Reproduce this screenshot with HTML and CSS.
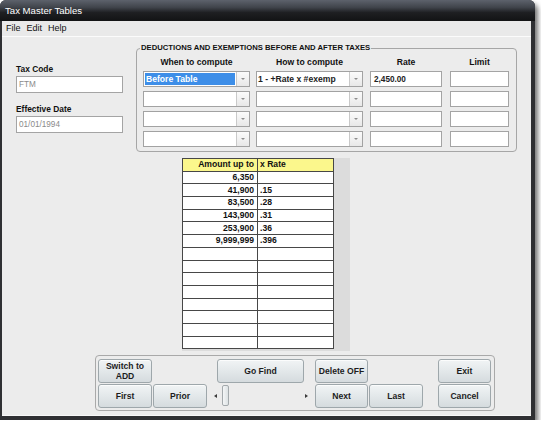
FILE: index.html
```html
<!DOCTYPE html>
<html>
<head>
<meta charset="utf-8">
<title>Tax Master Tables</title>
<link rel="stylesheet" href="styles.css">
</head>
<body>
<div class="window">
  <div class="titlebar">Tax Master Tables</div>
  <div class="client">
    <div class="menubar"><span>File</span><span>Edit</span><span>Help</span></div>

    <div class="top">
      <div class="ident">
        <div class="lbl">Tax Code</div>
        <div class="field dim">FTM</div>
        <div class="lbl lbl-gap">Effective Date</div>
        <div class="field dim">01/01/1994</div>
      </div>

      <fieldset class="deduct">
        <legend>DEDUCTIONS AND EXEMPTIONS BEFORE AND AFTER TAXES</legend>
        <div class="dgrid">
          <div class="colhead">When to compute</div>
          <div class="colhead">How to compute</div>
          <div class="colhead">Rate</div>
          <div class="colhead">Limit</div>

          <div class="combo"><div class="val"><span class="sel">Before Table</span></div><div class="drop"><i></i></div></div>
          <div class="combo"><div class="val">1 - +Rate x #exemp</div><div class="drop"><i></i></div></div>
          <div class="field strong">2,450.00</div>
          <div class="field"></div>

          <div class="combo"><div class="val"></div><div class="drop"><i></i></div></div>
          <div class="combo"><div class="val"></div><div class="drop"><i></i></div></div>
          <div class="field"></div>
          <div class="field"></div>

          <div class="combo"><div class="val"></div><div class="drop"><i></i></div></div>
          <div class="combo"><div class="val"></div><div class="drop"><i></i></div></div>
          <div class="field"></div>
          <div class="field"></div>

          <div class="combo"><div class="val"></div><div class="drop"><i></i></div></div>
          <div class="combo"><div class="val"></div><div class="drop"><i></i></div></div>
          <div class="field"></div>
          <div class="field"></div>
        </div>
      </fieldset>
    </div>

    <div class="tablepane">
      <table class="rates">
        <colgroup><col class="c-amt"><col class="c-rate"></colgroup>
        <thead>
          <tr><th class="num">Amount up to</th><th>x Rate</th></tr>
        </thead>
        <tbody>
          <tr><td class="num">6,350</td><td></td></tr>
          <tr><td class="num">41,900</td><td>.15</td></tr>
          <tr><td class="num">83,500</td><td>.28</td></tr>
          <tr><td class="num">143,900</td><td>.31</td></tr>
          <tr><td class="num">253,900</td><td>.36</td></tr>
          <tr><td class="num">9,999,999</td><td>.396</td></tr>
          <tr><td></td><td></td></tr>
          <tr><td></td><td></td></tr>
          <tr><td></td><td></td></tr>
          <tr><td></td><td></td></tr>
          <tr><td></td><td></td></tr>
          <tr><td></td><td></td></tr>
          <tr><td></td><td></td></tr>
          <tr><td></td><td></td></tr>
        </tbody>
      </table>
    </div>

    <div class="navpanel">
      <button class="btn b-switch">Switch to<br>ADD</button>
      <button class="btn b-find">Go Find</button>
      <button class="btn b-delete">Delete OFF</button>
      <button class="btn b-exit">Exit</button>

      <button class="btn b-first">First</button>
      <button class="btn b-prior">Prior</button>
      <div class="scroller">
        <span class="arrow left"></span>
        <span class="thumb"></span>
        <span class="arrow right"></span>
      </div>
      <button class="btn b-next">Next</button>
      <button class="btn b-last">Last</button>
      <button class="btn b-cancel">Cancel</button>
    </div>
  </div>
</div>
</body>
</html>
```

FILE: styles.css
```css
html, body {
  margin: 0;
  padding: 0;
  background: #ffffff;
}

body {
  font-family: "Liberation Sans", Arial, sans-serif;
  color: #111;
}

/* ---- window frame ---- */
.window {
  width: 535px;
  height: 420px;
  display: flex;
  flex-direction: column;
  background: #2f3033;
  border-radius: 6px 6px 0 0;
  box-shadow: 3px 4px 5px rgba(0, 0, 0, 0.55);
}

.titlebar {
  height: 21px;
  flex: none;
  padding-left: 5px;
  font-size: 9.6px;
  line-height: 22px;
  color: #ffffff;
  border-radius: 6px 6px 0 0;
  background: linear-gradient(#5d626c 0%, #40444b 35%, #1e1f22 60%, #121314 100%);
}

.client {
  flex: 1;
  margin: 0 4px 4px 2px;
  background: #ececec;
  border-bottom: 1px solid #f8f8f8;
}

.menubar {
  height: 15px;
  display: flex;
  gap: 6px;
  padding-left: 4px;
  font-size: 9px;
  line-height: 15px;
  color: #111;
  background: #e9e9e9;
  border-bottom: 1px solid #fbfbfb;
}

/* ---- header area ---- */
.top {
  display: flex;
  align-items: flex-start;
}

.ident {
  width: 107px;
  margin-left: 14px;
  padding-top: 27px;
}

.lbl {
  font-size: 8.4px;
  font-weight: bold;
  line-height: 11px;
  margin-bottom: 1px;
}

.lbl-gap {
  margin-top: 11px;
}

.field {
  height: 17px;
  box-sizing: border-box;
  border: 1px solid #a4a4a4;
  background: #ffffff;
  padding-left: 2px;
  font-size: 8.2px;
  line-height: 15px;
  white-space: nowrap;
  overflow: hidden;
}

.field.dim {
  color: #8a8a8a;
}

.field.strong {
  font-weight: bold;
  font-size: 8.2px;
  color: #222;
  padding-left: 3px;
}

.deduct {
  margin: 6px 0 0 13px;
  width: 381px;
  box-sizing: border-box;
  padding: 4px 6px 4px 6px;
  border: 1px solid #a6a6a6;
  border-radius: 4px;
  min-width: 0;
}

.deduct legend {
  padding: 0 1px;
  margin-left: -3px;
  font-size: 7.7px;
  font-weight: bold;
  line-height: 10px;
  color: #111;
}

.dgrid {
  display: grid;
  grid-template-columns: 107px 107px 72px 59px;
  column-gap: 6px;
  grid-template-rows: 10px repeat(4, 16px);
  row-gap: 4px;
}

.dgrid > :nth-child(4n+3) { margin-left: 1px; margin-right: -1px; }
.dgrid > :nth-child(4n+4) { margin-left: 3px; margin-right: -3px; }

.dgrid > .colhead {
  font-size: 8.6px;
  font-weight: bold;
  line-height: 10px;
  text-align: center;
  margin-bottom: -1px;
}

.dgrid > .combo,
.dgrid > .field {
  height: 16px;
}

.combo {
  display: flex;
  box-sizing: border-box;
  border: 1px solid #a2a2a2;
  background: #ffffff;
}

.combo .val {
  flex: 1;
  padding: 1px;
  font-size: 8.6px;
  font-weight: bold;
  line-height: 12px;
  white-space: nowrap;
  overflow: hidden;
  color: #222;
}

.combo .val .sel {
  display: block;
  height: 12px;
  padding-left: 1px;
  background: #3d8ee8;
  color: #ffffff;
}

.combo .drop {
  width: 12px;
  flex: none;
  border-left: 1px solid #c9c9c9;
  background: linear-gradient(#fbfbfb, #e8e8e8);
  display: flex;
  align-items: center;
  justify-content: center;
}

.combo .drop i {
  width: 0;
  height: 0;
  border-left: 2px solid transparent;
  border-right: 2px solid transparent;
  border-top: 2px solid #8d8d8d;
}

/* ---- rate table ---- */
.tablepane {
  margin: 6px 0 0 180px;
  width: 168px;
  height: 193px;
  background: #dcdcdc;
}

.rates {
  width: 151px;
  border-collapse: collapse;
  table-layout: fixed;
  font-size: 8.6px;
  font-weight: bold;
  color: #111;
}

.rates .c-amt { width: 75px; }
.rates .c-rate { width: 76px; }

.rates th,
.rates td {
  border: 1px solid #474747;
  height: 11.7px;
  padding: 0 2px 0 2px;
  line-height: 11px;
  text-align: left;
  white-space: nowrap;
  background: #ffffff;
}

.rates th {
  background: #fbf78c;
}

.rates .num {
  text-align: right;
  padding-right: 3px;
}

/* ---- navigation panel ---- */
.navpanel {
  margin: 4px 0 0 93px;
  width: 400px;
  height: 56px;
  box-sizing: border-box;
  padding: 3px 1px 1px 2px;
  border: 1px solid #a9a9a9;
  border-radius: 4px;
  display: grid;
  grid-template-columns: 55px 55px 107px 54px 55px 14px 54px;
  grid-template-rows: 24px 24px;
  row-gap: 1px;
}

.btn {
  margin: 0 1px 0 0;
  padding: 0;
  box-sizing: border-box;
  border: 1px solid #9ea7ab;
  border-radius: 3px;
  background: linear-gradient(#f1f4f5 0%, #e3e8ea 50%, #d5dbde 100%);
  box-shadow: inset 0 1px 0 #fbfcfc;
  font-family: "Liberation Sans", Arial, sans-serif;
  font-size: 8.6px;
  font-weight: bold;
  line-height: 10px;
  color: #1d1d1d;
}

.b-switch { grid-column: 1; grid-row: 1; }
.b-find   { grid-column: 3; grid-row: 1; margin: 0 11px 0 9px; }
.b-delete { grid-column: 4; grid-row: 1; }
.b-exit   { grid-column: 7; grid-row: 1; }
.b-first  { grid-column: 1; grid-row: 2; }
.b-prior  { grid-column: 2; grid-row: 2; }
.b-next   { grid-column: 4; grid-row: 2; }
.b-last   { grid-column: 5; grid-row: 2; }
.b-cancel { grid-column: 7; grid-row: 2; }

.scroller {
  grid-column: 3;
  grid-row: 2;
  margin: 1px 3px 2px 2px;
  display: flex;
  align-items: center;
  padding: 0 4px;
}

.scroller .arrow {
  width: 0;
  height: 0;
  border-top: 2.5px solid transparent;
  border-bottom: 2.5px solid transparent;
}

.scroller .arrow.left {
  border-right: 3px solid #3a3a3a;
}

.scroller .arrow.right {
  border-left: 3px solid #3a3a3a;
  margin-left: auto;
}

.scroller .thumb {
  width: 7px;
  height: 21px;
  margin-left: 5px;
  box-sizing: border-box;
  border: 1px solid #a3a9ac;
  border-radius: 2px;
  background: linear-gradient(90deg, #f4f6f7, #dde2e4);
}
```
